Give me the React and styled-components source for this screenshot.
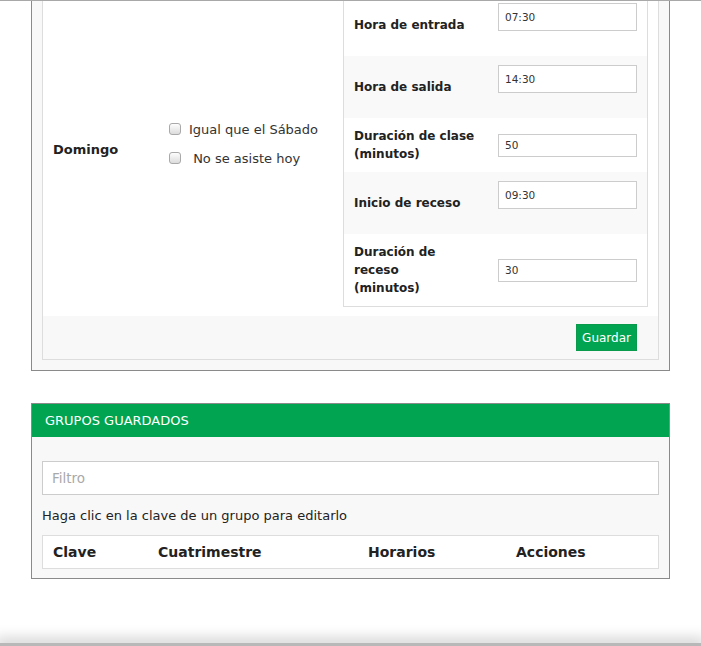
import styled, { createGlobalStyle } from "styled-components";

const GlobalStyle = createGlobalStyle`
  html, body {
    margin: 0;
    padding: 0;
    background: #ffffff;
    font-family: "DejaVu Sans", Verdana, sans-serif;
    color: #222222;
  }
  * {
    box-sizing: border-box;
  }
`;

const TopEdge = styled.div`
  position: fixed;
  top: 0;
  left: 0;
  right: 0;
  height: 1px;
  background: #a8a8a8;
  z-index: 2;
`;

const BottomBar = styled.div`
  position: fixed;
  bottom: 0;
  left: 0;
  right: 0;
  height: 3px;
  background: #b8b8b8;
  box-shadow: 0 0 14px 5px rgba(0, 0, 0, 0.18);
  z-index: 2;
`;

const Page = styled.div`
  margin: -29px 31px 0 31px;
  padding-bottom: 80px;
`;

const OuterPanel = styled.section`
  border: 1px solid #8a8a8a;
  background: #f8f8f8;
  padding: 10px;
`;

const InnerPanel = styled.div`
  border: 1px solid #dddddd;
  background: #ffffff;
`;

const DayRow = styled.div`
  display: flex;
  align-items: center;
  padding: 10px 0 9px 0;
`;

const DayName = styled.div`
  width: 115px;
  padding-left: 10px;
  margin-top: -1px;
  font-size: 13px;
  font-weight: bold;
`;

const Options = styled.div`
  width: 175px;
  padding: 0 10px;
  font-size: 13px;
  color: #333333;
`;

const CheckRow = styled.label`
  display: flex;
  align-items: flex-start;
  line-height: 18px;
  margin-bottom: 11px;
`;

const Check = styled.input`
  appearance: none;
  width: 12px;
  height: 12px;
  margin: 2px 8px 0 1px;
  border: 1px solid #a9a9a9;
  border-radius: 3px;
  background: linear-gradient(#fdfdfd, #dcdcdc);
  flex-shrink: 0;
`;

const SettingsCell = styled.div`
  width: 325px;
  padding: 0 10px;
`;

const SettingsTable = styled.div`
  border: 1px solid #dddddd;
`;

const SettingRow = styled.div`
  display: flex;
  align-items: center;
  padding: 9px 0;
  background: ${(p) => (p.$striped ? "#f9f9f9" : "#ffffff")};
`;

const SettingLabel = styled.div`
  width: 144px;
  padding: 0 10px;
  font-size: 12px;
  font-weight: bold;
  line-height: 18px;
`;

const SettingValue = styled.div`
  padding: 0 10px;
`;

const ValueInput = styled.input`
  display: block;
  width: 139px;
  height: ${(p) => (p.$time ? "28px" : "23px")};
  margin-bottom: ${(p) => (p.$time ? "16px" : "0")};
  border: 1px solid #cccccc;
  padding: 0 6px;
  font-family: "DejaVu Sans", sans-serif;
  font-size: 10.5px;
  color: #333333;
  background: #ffffff;
  outline: none;
`;

const PanelFooter = styled.div`
  display: flex;
  justify-content: flex-end;
  background: #f8f8f8;
  padding: 8px 21px 8px 10px;
`;

const SaveButton = styled.button`
  height: 27px;
  padding: 0 5px;
  border: 1px solid #0a9a4c;
  background: #01a551;
  color: #ffffff;
  font-family: "DejaVu Sans", sans-serif;
  font-size: 12px;
  cursor: pointer;
`;

const GroupsPanel = styled.section`
  margin-top: 32px;
  border: 1px solid #8a8a8a;
  background: #f8f8f8;
`;

const GroupsHeader = styled.div`
  height: 33px;
  display: flex;
  align-items: center;
  padding-left: 13px;
  background: #01a551;
  color: #ffffff;
  font-size: 13px;
`;

const GroupsBody = styled.div`
  padding: 24px 10px 9px 10px;
`;

const FilterInput = styled.input`
  display: block;
  width: 100%;
  height: 34px;
  border: 1px solid #cccccc;
  padding: 0 9px;
  background: #ffffff;
  font-family: "DejaVu Sans", sans-serif;
  font-size: 13.5px;
  color: #333333;
  outline: none;
  &::placeholder {
    color: #a9a9a9;
  }
`;

const Hint = styled.p`
  margin: 12px 0 10px 0;
  font-size: 13px;
  line-height: 18px;
  color: #222222;
`;

const GroupsTable = styled.div`
  display: flex;
  height: 34px;
  align-items: center;
  border: 1px solid #dddddd;
  background: #ffffff;
`;

const HeadCell = styled.div`
  width: ${(p) => p.$w};
  padding-left: 10px;
  font-size: 14px;
  font-weight: bold;
  color: #222222;
`;

const settings = [
  { label: ["Hora de entrada"], value: "07:30", time: true },
  { label: ["Hora de salida"], value: "14:30", time: true },
  { label: ["Duración de clase", "(minutos)"], value: "50" },
  { label: ["Inicio de receso"], value: "09:30", time: true },
  { label: ["Duración de", "receso", "(minutos)"], value: "30" },
];

const columns = [
  { name: "Clave", w: "105px" },
  { name: "Cuatrimestre", w: "210px" },
  { name: "Horarios", w: "148px" },
  { name: "Acciones", w: "150px" },
];

export default function App() {
  return (
    <>
      <GlobalStyle />
      <TopEdge />
      <Page>
        <OuterPanel>
          <InnerPanel>
            <DayRow>
              <DayName>Domingo</DayName>
              <Options>
                <CheckRow>
                  <Check type="checkbox" />
                  <span>Igual que el Sábado</span>
                </CheckRow>
                <CheckRow>
                  <Check type="checkbox" />
                  <span>{"\u00a0"}No se asiste hoy</span>
                </CheckRow>
              </Options>
              <SettingsCell>
                <SettingsTable>
                  {settings.map((s, i) => (
                    <SettingRow key={i} $striped={i % 2 === 1}>
                      <SettingLabel>
                        {s.label.map((line, j) => (
                          <div key={j}>{line}</div>
                        ))}
                      </SettingLabel>
                      <SettingValue>
                        <ValueInput
                          type="text"
                          defaultValue={s.value}
                          $time={s.time}
                        />
                      </SettingValue>
                    </SettingRow>
                  ))}
                </SettingsTable>
              </SettingsCell>
            </DayRow>
            <PanelFooter>
              <SaveButton>Guardar</SaveButton>
            </PanelFooter>
          </InnerPanel>
        </OuterPanel>

        <GroupsPanel>
          <GroupsHeader>GRUPOS GUARDADOS</GroupsHeader>
          <GroupsBody>
            <FilterInput type="text" placeholder="Filtro" />
            <Hint>Haga clic en la clave de un grupo para editarlo</Hint>
            <GroupsTable>
              {columns.map((c) => (
                <HeadCell key={c.name} $w={c.w}>
                  {c.name}
                </HeadCell>
              ))}
            </GroupsTable>
          </GroupsBody>
        </GroupsPanel>
      </Page>
      <BottomBar />
    </>
  );
}
